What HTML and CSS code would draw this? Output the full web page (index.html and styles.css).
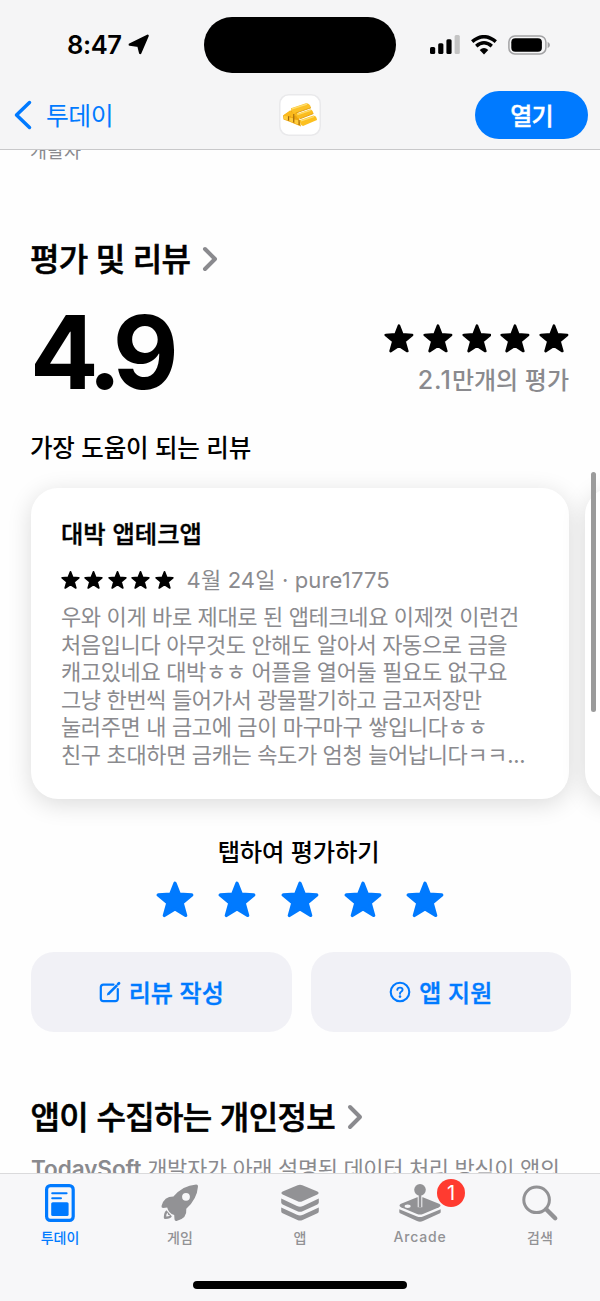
FILE: index.html
```html
<!DOCTYPE html>
<html lang="ko">
<head>
<meta charset="utf-8">
<title>평가 및 리뷰</title>
<link rel="stylesheet" href="styles.css">
</head>
<body>
<svg class="defs" aria-hidden="true">
  <symbol id="star" viewBox="0 0 38 36">
    <path d="M19 1.8 23.3 12.8 35.7 13.5 26.1 21.5 29.6 33.9 19 27.2 8.4 33.9 11.9 21.5 2.3 13.5 14.7 12.8Z" fill="currentColor" stroke="currentColor" stroke-width="3.4" stroke-linejoin="round"/>
  </symbol>
  <symbol id="chevron" viewBox="0 0 16 26">
    <path d="M3 3 13 13 3 23" fill="none" stroke="currentColor" stroke-width="4" stroke-linecap="round" stroke-linejoin="round"/>
  </symbol>
</svg>
<div class="phone">
  <header class="top">
    <div class="status">
      <div class="clock">
        <span class="time">8:47</span>
        <svg class="locate" viewBox="0 0 22 22"><path d="M19.6 1.8 12.2 19 10.4 11.8 1.8 10.6Z" fill="#000" stroke="#000" stroke-width="2.4" stroke-linejoin="round"/></svg>
      </div>
      <div class="island"></div>
      <div class="signals">
        <svg class="bars" viewBox="0 0 30 20"><rect x="0" y="12" width="5.2" height="7" rx="1.5"/><rect x="8.2" y="8.2" width="5.2" height="10.8" rx="1.5"/><rect x="16.4" y="4.2" width="5.2" height="14.8" rx="1.5"/><rect x="24.6" y="0" width="5.2" height="19" rx="1.5" fill="#c4c4c4"/></svg>
        <svg class="wifi" viewBox="0 0 26 20"><g fill="none" stroke="#000" stroke-width="3.5"><path d="M1.2 6.7Q13-3.3 24.8 6.7"/><path d="M5.2 11.1Q13 4.5 20.8 11.1"/></g><path d="M13 19.4 8.7 14.9Q13 11.2 17.3 14.9Z"/></svg>
        <svg class="battery" viewBox="0 0 42 20"><rect x=".9" y=".9" width="37" height="18" rx="6" fill="none" stroke="#a2a2a4" stroke-width="1.5"/><rect x="3.3" y="3.3" width="30.6" height="13.4" rx="4"/><path d="M39.6 6.8Q42 8 42 10T39.6 13.2Z" fill="#a2a2a4"/></svg>
      </div>
    </div>
    <nav class="nav">
      <div class="back">
        <svg class="back-icon" viewBox="0 0 18 30"><path d="M15.5 2.5 2.5 15 15.5 27.5" fill="none" stroke="#007aff" stroke-width="3.5" stroke-linecap="round" stroke-linejoin="round"/></svg>
        <span>투데이</span>
      </div>
      <svg class="app-icon" viewBox="0 0 42 42">
        <rect x=".75" y=".75" width="40.5" height="40.5" rx="9" fill="#fff" stroke="#e9e9eb" stroke-width="1.5"/>
        <path d="M4 21.5 13 16 20 24 22 32.5 10 27.5 4.5 25.5Z" fill="#eda610"/>
        <g id="bars-left" stroke="#fbb91c" stroke-width="4.2"><path d="M6 22.8 12.5 18"/><path d="M11.5 21.5 18 18.5"/></g>
        <g>
          <path d="M12 14.2 27 9.3Q31 9.3 32 13.8L16.5 19.2Q12 19 12 14.2Z" fill="#fcc126"/>
          <path d="M13 14.9 28 10.1" stroke="#ffdf70" stroke-width="1.3"/>
          <path d="M16.5 19.2 32 13.8" stroke="#de9a0c" stroke-width=".9"/>
          <path d="M17 20.2 31 15.4Q34 15.6 34.4 19.6L21 24.8Q17.2 24.4 17 20.2Z" fill="#fbbc1d"/>
          <path d="M18.4 20.6 31.6 16.3" stroke="#ffdc66" stroke-width="1.3"/>
          <path d="M21 24.8 34.4 19.6" stroke="#de9a0c" stroke-width=".9"/>
          <path d="M20.6 26.3 34.5 21.6Q37.6 22 38 26L24 31.9Q20.8 31 20.6 26.3Z" fill="#fcc020"/>
          <path d="M22 26.8 35.2 22.5" stroke="#ffdf70" stroke-width="1.3"/>
        </g>
        <path d="M9.6 22.2V26.5M14.8 20V28.5M20 26V31" stroke="#94620f" stroke-width="1"/>
        <path d="M4.6 21.8 8.8 22.5V26.2L5 25.2ZM10.4 23.5 14 24.2V28.4L10.4 27ZM15.6 25.4 19.3 26.3V30.6L15.6 29.2Z" fill="#ffcc3c"/>
      </svg>
      <button class="open">열기</button>
    </nav>
  </header>

  <main class="content">
    <p class="developer">개발자</p>
    <h2 class="section-title">평가 및 리뷰<svg class="chevron"><use href="#chevron"/></svg></h2>
    <div class="summary">
      <div class="score">4.9</div>
      <div class="totals">
        <div class="stars stars-total"><svg><use href="#star"/></svg><svg><use href="#star"/></svg><svg><use href="#star"/></svg><svg><use href="#star"/></svg><svg><use href="#star"/></svg></div>
        <p class="count"><span class="latin">2.1</span>만개의 평가</p>
      </div>
    </div>
    <h3 class="subtitle">가장 도움이 되는 리뷰</h3>
    <div class="reviews">
      <article class="card">
        <h4 class="card-title">대박 앱테크앱</h4>
        <div class="meta">
          <div class="stars stars-card"><svg><use href="#star"/></svg><svg><use href="#star"/></svg><svg><use href="#star"/></svg><svg><use href="#star"/></svg><svg><use href="#star"/></svg></div>
          <span class="byline"><span class="latin">4</span>월 <span class="latin">24</span>일 <span class="latin">·</span> <span class="latin">pure1775</span></span>
        </div>
        <p class="review">우와 이게 바로 제대로 된 앱테크네요 이제껏 이런건<br>처음입니다 아무것도 안해도 알아서 자동으로 금을<br>캐고있네요 대박ㅎㅎ 어플을 열어둘 필요도 없구요<br>그냥 한번씩 들어가서 광물팔기하고 금고저장만<br>눌러주면 내 금고에 금이 마구마구 쌓입니다ㅎㅎ<br>친구 초대하면 금캐는 속도가 엄청 늘어납니다ㅋㅋ<span class="latin">...</span></p>
      </article>
      <article class="card"></article>
    </div>
    <p class="rate-label">탭하여 평가하기</p>
    <div class="stars stars-rate"><svg><use href="#star"/></svg><svg><use href="#star"/></svg><svg><use href="#star"/></svg><svg><use href="#star"/></svg><svg><use href="#star"/></svg></div>
    <div class="actions">
      <button class="action">
        <svg viewBox="0 0 22 22"><path d="M14.5 3.6H4.4Q1.8 3.6 1.8 6.2V17.6Q1.8 20.2 4.4 20.2H16.2Q18.8 20.2 18.8 17.6V8" fill="none" stroke="#007aff" stroke-width="2.2" stroke-linecap="round"/><path d="M9.2 13.2 18.2 4.2" stroke="#007aff" stroke-width="2.6"/><path d="M7.8 14.6 8.6 12 10.4 13.8Z" fill="#007aff"/><path d="M19.2 3.1 20 2.3" stroke="#007aff" stroke-width="2.8" stroke-linecap="round"/></svg>
        <span>리뷰 작성</span>
      </button>
      <button class="action">
        <svg viewBox="0 0 22 22"><circle cx="11" cy="11" r="9.3" fill="none" stroke="#007aff" stroke-width="2.1"/><path d="M8.3 8.8Q8.5 6.6 11 6.6T13.6 8.8Q13.6 10 12.2 10.8T11 12.8" fill="none" stroke="#007aff" stroke-width="1.9" stroke-linecap="round"/><circle cx="11" cy="15.6" r="1.3" fill="#007aff"/></svg>
        <span>앱 지원</span>
      </button>
    </div>
    <h2 class="section-title privacy">앱이 수집하는 개인정보<svg class="chevron"><use href="#chevron"/></svg></h2>
    <p class="privacy-text"><span class="latin vendor">TodaySoft</span> 개발자가 아래 설명된 데이터 처리 방식이 앱의</p>
    <div class="scrollbar"></div>
  </main>

  <footer class="bottom">
    <div class="tabs">
      <div class="tab active">
        <svg viewBox="0 0 42 42"><rect x="7.6" y="3.6" width="26.6" height="34.8" rx="3.8" fill="none" stroke="currentColor" stroke-width="3.2"/><path d="M13.2 11.3H27.6M13.2 16.2H22" stroke="currentColor" stroke-width="2" stroke-linecap="round"/><rect x="12.2" y="20.2" width="17.4" height="13.8" rx="1.6" fill="currentColor"/></svg>
        <span>투데이</span>
      </div>
      <div class="tab">
        <svg viewBox="0 0 42 42"><path d="M37.2 2.4Q39.2 2.4 39 4.4 38 17 27.3 26.8 28.4 36.6 17.6 38.9 15.6 39.2 15.5 37.2L15.2 33Q9.5 31.5 8.2 25.6L4.2 26Q2.2 26 2.5 24 5 14.6 14.4 14.6 23.4 3.4 37.2 2.4Z" fill="currentColor"/><circle cx="27" cy="14.8" r="3.9" fill="#f7f7f9"/><path d="M7.4 28.2 12.8 34.2Q11.6 36.9 6.4 37 4.8 37 4.8 35.4 4.9 30.2 7.4 28.2Z" fill="currentColor"/><path d="M8.4 30.4Q7 32.2 7.2 34.6 9.7 34.6 11.3 33.2L9.3 32.9Z" fill="#f7f7f9"/></svg>
        <span>게임</span>
      </div>
      <div class="tab">
        <svg viewBox="0 0 42 42"><g fill="currentColor"><path d="M18.6 3.2Q21 2.3 23.4 3.2L38.4 9.5Q40.8 11 38.4 12.5L23.4 19.2Q21 20.2 18.6 19.2L3.6 12.5Q1.2 11 3.6 9.5Z"/><path id="layer" d="M2.2 16.6 18 24Q21 25.3 24 24L39.8 16.6V20.5Q39.8 21.8 38.4 22.4L23.6 29.2Q21 30.2 18.4 29.2L3.6 22.4Q2.2 21.8 2.2 20.5Z"/><use href="#layer" y="8.8"/></g></svg>
        <span>앱</span>
      </div>
      <div class="tab">
        <svg viewBox="0 0 42 42"><g fill="currentColor"><path d="M18.2 15.3 2 21.7Q-.8 23.4 2 25.3L18 32.1Q21 33.1 24 32.1L40 25.3Q42.8 23.4 40 21.7L23.8 15.3Z"/><circle cx="21" cy="7.8" r="5.8"/><path d="M.3 27.2 18 34.6Q21 35.6 24 34.6L41.7 27.2V30Q41.7 31 40.4 31.6L24 39Q21 40.4 18 39L1.6 31.6Q.3 31 .3 30Z"/></g><path d="M18.7 14.5V25.2H23.3V14.5" fill="#f7f7f9"/><path d="M21 13V25" stroke="currentColor" stroke-width="2.6"/><ellipse cx="8.6" cy="24.2" rx="3" ry="1.7" fill="#f7f7f9"/></svg>
        <b class="badge">1</b>
        <span class="latin">Arcade</span>
      </div>
      <div class="tab">
        <svg viewBox="0 0 42 42"><circle cx="17.6" cy="17.8" r="12.8" fill="none" stroke="currentColor" stroke-width="3"/><path d="M27.2 27.2 36.2 36.2" stroke="currentColor" stroke-width="4.4" stroke-linecap="round"/></svg>
        <span>검색</span>
      </div>
    </div>
    <div class="home-bar"></div>
  </footer>
</div>
</body>
</html>
```
FILE: styles.css
```css
* { box-sizing: border-box; margin: 0; padding: 0; }
body {
  width: 600px;
  background: #fff;
  color: #000;
  font-family: "Noto Sans CJK KR", sans-serif;
}
svg { display: block; flex: none; }
button { border: 0; font: inherit; }
.defs { position: absolute; width: 0; height: 0; }
.latin { font-family: Inter, sans-serif; }
.phone {
  display: flex;
  flex-direction: column;
  height: 1301px;
  overflow: hidden;
  background: #fefefe;
}

/* Status bar and navigation */
.top {
  flex: none;
  height: 150px;
  background: #f5f5f6;
  border-bottom: 1px solid #c8c8ca;
}
.status {
  display: grid;
  grid-template-columns: 204px 192px 204px;
  align-items: center;
  height: 90px;
}
.clock { display: flex; align-items: center; padding-left: 67px; gap: 6px; }
.time { font: 600 25.5px/30px Inter, sans-serif; letter-spacing: -0.4px; }
.locate { width: 22px; height: 22px; }
.island { height: 56px; border-radius: 28px; background: #000; }
.signals { display: flex; align-items: center; padding-left: 34px; gap: 11px; }
.bars { width: 30px; height: 20px; }
.wifi { width: 26px; height: 20px; }
.battery { width: 42px; height: 20px; }
.nav {
  display: grid;
  grid-template-columns: 279px 42px 1fr;
  align-items: center;
  height: 50px;
}
.back {
  display: flex;
  align-items: center;
  gap: 14px;
  padding-left: 14px;
  color: #007aff;
  font-size: 24.8px;
  line-height: 32px;
  letter-spacing: -0.5px;
}
.back span { margin-top: -2px; }
.back-icon { width: 18px; height: 30px; }
.app-icon { width: 42px; height: 42px; }
.open {
  justify-self: end;
  width: 113px;
  height: 48px;
  margin-right: 12px;
  padding-bottom: 1px;
  border-radius: 24px;
  background: #007aff;
  color: #fff;
  font-size: 24px;
  font-weight: 500;
  line-height: 32px;
  letter-spacing: -0.9px;
  -webkit-text-stroke: 0.4px #fff;
}

/* Scrolling page */
.content {
  position: relative;
  flex: 1;
  min-height: 0;
  overflow: hidden;
  padding: 0 30px;
}
.developer {
  margin-top: -12px;
  color: #8a8a8e;
  font-size: 18.5px;
  line-height: 24px;
}
.section-title {
  display: flex;
  align-items: center;
  gap: 12px;
  margin-top: 75px;
  font-size: 32px;
  font-weight: 500;
  line-height: 40px;
  letter-spacing: -0.7px;
  -webkit-text-stroke: 0.6px #000;
}
.chevron { width: 16px; height: 26px; margin-top: 4px; color: #8a8a8e; }
.summary {
  display: flex;
  justify-content: space-between;
  height: 100px;
  margin-top: 25px;
}
.score {
  font: 700 101.5px/100px Inter, sans-serif;
  letter-spacing: -7.5px;
}
.totals { padding-top: 22px; margin-right: 1px; }
.stars { display: flex; }
.stars-total { justify-content: flex-end; gap: 8.9px; }
.stars-total svg { width: 29.9px; height: 29px; }
.count {
  margin-top: 10px;
  color: #8a8a8e;
  font-size: 24px;
  font-weight: 500;
  line-height: 32px;
  text-align: right;
  white-space: nowrap;
}
.count .latin { font-size: 25px; letter-spacing: 1px; }
.subtitle {
  margin-top: 29px;
  font-size: 24.5px;
  font-weight: 500;
  line-height: 32px;
  letter-spacing: -0.2px;
}
.reviews {
  display: flex;
  gap: 16px;
  height: 311px;
  margin-top: 25px;
  padding-left: 1px;
}
.card {
  flex: none;
  width: 538px;
  padding: 29px 30px;
  border-radius: 27px;
  background: #fff;
  box-shadow: 0 5px 24px rgba(0, 0, 0, 0.14);
}
.card-title {
  font-size: 24.3px;
  font-weight: 500;
  line-height: 32px;
  -webkit-text-stroke: 0.4px #000;
}
.meta {
  display: flex;
  align-items: center;
  gap: 13px;
  height: 28px;
  margin-top: 16px;
}
.stars-card { gap: 4.4px; margin-top: 1px; }
.stars-card svg { width: 19px; height: 18px; }
.byline {
  color: #8a8a8e;
  font-size: 22px;
  line-height: 28px;
  letter-spacing: 0.15px;
  white-space: nowrap;
}
.review {
  margin-top: 9px;
  color: #8a8a8e;
  font-size: 22px;
  line-height: 27.5px;
  letter-spacing: -0.37px;
  white-space: nowrap;
}
.rate-label {
  margin-top: 36px;
  font-size: 24.3px;
  font-weight: 500;
  line-height: 32px;
  letter-spacing: -0.2px;
  text-align: center;
  transform: translateX(-1.5px);
}
.stars-rate {
  justify-content: center;
  gap: 24.6px;
  margin-top: 14px;
  color: #007aff;
}
.stars-rate svg { width: 38px; height: 37px; }
.actions {
  display: grid;
  grid-template-columns: 1fr 1fr;
  gap: 19px;
  height: 80px;
  margin: 34px -1px 0 1px;
}
.action {
  display: flex;
  align-items: center;
  justify-content: center;
  gap: 8px;
  border-radius: 23px;
  background: #f1f1f6;
  color: #007aff;
  font-size: 24px;
  font-weight: 500;
  line-height: 32px;
  -webkit-text-stroke: 0.4px #007aff;
}
.action span { margin-top: -1px; }
.action svg { width: 22px; height: 22px; }
.privacy { margin-top: 63px; letter-spacing: -0.65px; padding-left: 0.5px; }
.privacy-text {
  margin-top: 16px;
  padding-left: 1px;
  color: #8a8a8e;
  font-size: 22px;
  line-height: 32px;
  letter-spacing: -0.36px;
  white-space: nowrap;
}
.vendor { font-size: 22.5px; font-weight: 600; letter-spacing: -0.05px; }
.scrollbar {
  position: absolute;
  top: 322px;
  right: 4px;
  width: 5px;
  height: 240px;
  border-radius: 3px;
  background: #9b9b9b;
}

/* Tab bar */
.bottom {
  flex: none;
  height: 128px;
  border-top: 1px solid #dadadc;
  background: #f7f7f9;
}
.tabs { display: grid; grid-template-columns: repeat(5, 120px); height: 108px; }
.tab {
  position: relative;
  display: flex;
  flex-direction: column;
  align-items: center;
  padding-top: 8px;
  color: #929295;
  font-size: 14px;
  font-weight: 500;
  line-height: 20px;
}
.tab svg { width: 42px; height: 42px; margin-right: 1px; }
.tab span { margin-top: 3px; }
.tab .latin { letter-spacing: 0.8px; }
.active { color: #007aff; }
.active svg { margin-right: 0; }
.badge {
  position: absolute;
  top: 5px;
  left: 77px;
  width: 28px;
  height: 28px;
  border-radius: 14px;
  background: #ff3b30;
  color: #fff;
  font: 400 20px/28px Inter, sans-serif;
  text-align: center;
}
.home-bar {
  width: 214px;
  height: 8px;
  margin: -1px auto 0;
  border-radius: 4px;
  background: #000;
}
```
